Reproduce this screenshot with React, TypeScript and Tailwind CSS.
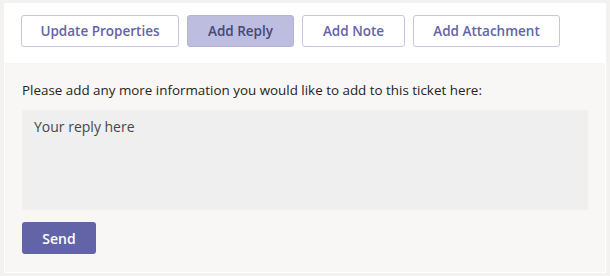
import { useState } from "react";

const tabs = [
	{ label: "Update Properties", width: "w-[158px]" },
	{ label: "Add Reply", width: "w-[107px]" },
	{ label: "Add Note", width: "w-[103px]" },
	{ label: "Add Attachment", width: "w-[147px]" },
];

export default function App() {
	const [active, setActive] = useState("Add Reply");
	const [reply, setReply] = useState("");

	return (
		<div
			className="min-h-[276px] bg-[#f3f2f1] pt-[3px] pl-[4px] pr-[4px] pb-[4px]"
			style={{ fontFamily: '"Open Sans", "Noto Sans", sans-serif' }}
		>
			<div className="flex flex-col bg-white p-px">
				{/* Toolbar */}
				<div className="flex items-center gap-[8px] px-[16px] pt-[11px] pb-[16px]">
					{tabs.map((tab) => (
						<button
							key={tab.label}
							type="button"
							onClick={() => setActive(tab.label)}
							className={`h-[32px] ${tab.width} rounded-[3px] border text-[13.5px] font-semibold ${
								active === tab.label
									? "border-[#b4b4d9] bg-[#bdbde0] text-[#464775]"
									: "border-[#c5c5e4] bg-white text-[#6264a7]"
							}`}
						>
							{tab.label}
						</button>
					))}
				</div>

				{/* Reply form */}
				<div className="flex flex-col bg-[#f8f7f6] px-[17px] pt-[17px] pb-[18px]">
					<p className="text-[13.4px] text-[#252423]">
						Please add any more information you would like to add to this ticket here:
					</p>
					<textarea
						value={reply}
						onChange={(e) => setReply(e.target.value)}
						placeholder="Your reply here"
						className="mt-[10px] h-[100px] resize-none rounded-[3px] bg-[#efefef] px-[12px] pt-[6px] pb-[8px] text-[14px] text-[#252423] placeholder:text-[#484644] focus:outline-none"
					/>
					<div className="mt-[12px]">
						<button
							type="button"
							className="h-[32px] w-[74px] rounded-[3px] bg-[#6264a7] text-[14px] font-semibold text-white"
						>
							Send
						</button>
					</div>
				</div>
			</div>
		</div>
	);
}
